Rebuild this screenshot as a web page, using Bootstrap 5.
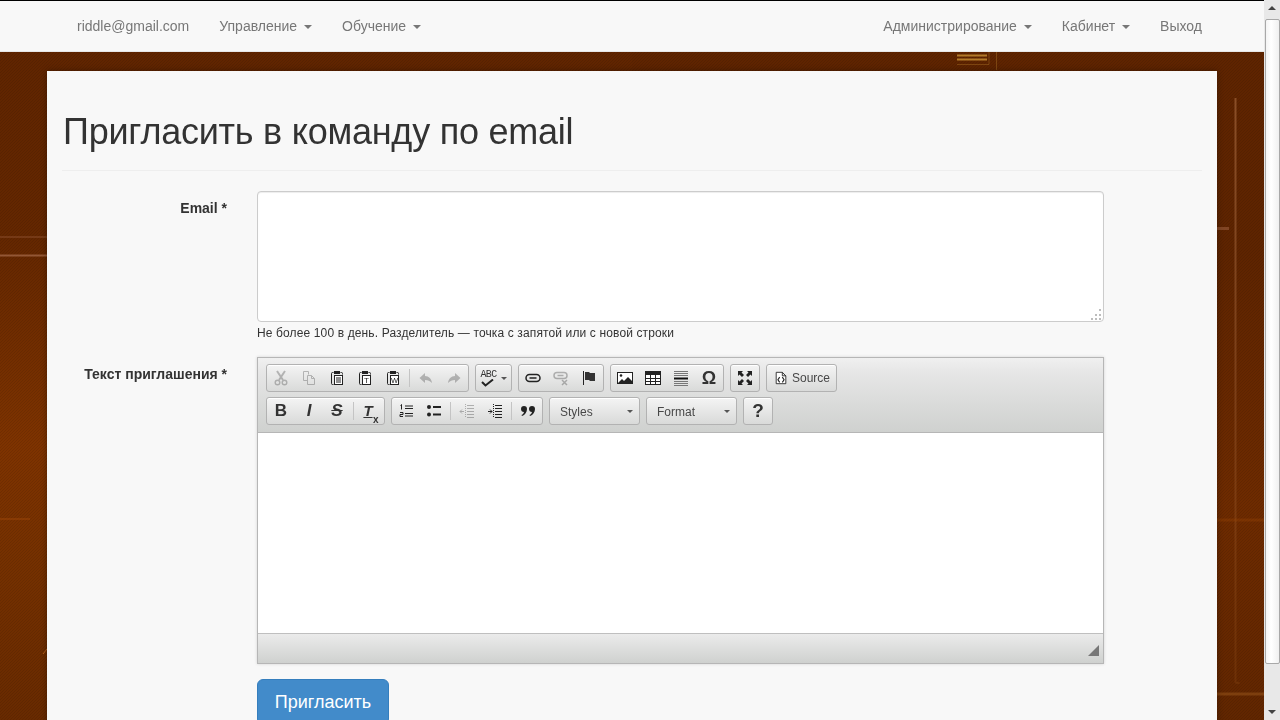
<!DOCTYPE html>
<html lang="ru">
<head>
    <meta charset="UTF-8">
    <meta name="viewport" content="width=device-width, initial-scale=1.0">
    <title>Пригласить в команду по email</title>
    <link href="https://cdn.jsdelivr.net/npm/bootstrap@5.3.0/dist/css/bootstrap.min.css" rel="stylesheet">
    <style>
        html, body { height: 100%; overflow: hidden; }
        body {
            font-family: "Liberation Sans", Arial, sans-serif;
            font-size: 14px;
            line-height: 20px;
            color: #333;
            background: #612500;
            padding-right: 16px;
        }
        /* background picture */
        .bg-art { position: fixed; top: 0; left: 0; width: 1264px; height: 720px; z-index: -1; }

        /* top menu */
        .top-bar {
            height: 52px;
            background: #f8f8f8;
            border-top: 1px solid #000;
            border-bottom: 1px solid #e7e7e7;
            padding: 0 47px 0 62px;
        }
        .top-bar .nav-link { color: #777; padding: 15px; line-height: 20px; }
        .top-bar .dropdown-toggle::after { margin-left: 7px; border-width: 4px 4px 0; vertical-align: 2px; }

        /* main panel */
        .main-panel {
            width: 1170px;
            margin: 19px 0 0 47px;
            padding: 0 15px;
            min-height: 660px;
            background: #f8f8f8;
            box-shadow: 0 0 6px rgba(0, 0, 0, .35);
        }
        .page-title {
            margin: 0 0 20px;
            padding: 41px 0 18px 1px;
            height: 100px;
            font-size: 36px;
            line-height: 39.6px;
            font-weight: 400;
            letter-spacing: -.24px;
            border-bottom: 1px solid #eee;
        }
        .form-line { --bs-gutter-x: 30px; }
        .form-line .col-9 { width: 877px; }
        .field-label { padding-top: 7px; text-align: right; font-weight: 700; }
        .mail-box {
            display: block;
            width: 100%;
            height: 131px;
            resize: none;
            border: 1px solid #ccc;
            border-radius: 4px;
            box-shadow: inset 0 1px 1px rgba(0, 0, 0, .075);
            background: #fff;
        }
        .grip { position: absolute; right: 2px; bottom: 2px; }
        .help-line { margin: 3px 0 15px; font-size: 12px; line-height: 17px; letter-spacing: .13px; }

        /* rich text editor */
        .editor { height: 307px; border: 1px solid #b6b6b6; box-shadow: 0 0 3px rgba(0, 0, 0, .15); }
        .editor-tools {
            height: 75px;
            padding: 6px 8px 0;
            background: linear-gradient(#f0f0f0, #e6e6e6 20%, #cfd1cf);
            border-bottom: 1px solid #b6b6b6;
        }
        .tool-row { height: 28px; margin-bottom: 5px; gap: 6px; }
        .tool-group {
            height: 28px;
            border: 1px solid #b2b2b2;
            border-radius: 3px;
            background: linear-gradient(#f4f4f4, #d9dad9);
            box-shadow: inset 0 1px 0 #fff;
        }
        .tool-btn {
            width: 28px;
            height: 26px;
            color: #333;
            font-size: 17px;
            line-height: 26px;
        }
        .tool-btn.off svg { opacity: .3; }
        .tool-btn svg { display: block; }
        .tool-sep { width: 5px; height: 26px; }
        .tool-sep::before { content: ""; display: block; width: 1px; height: 18px; margin: 4px 0 0 2px; background: #c4c4c4; }
        .wide-btn { width: 35px; }
        .spell-word { font-family: "Liberation Mono", monospace; font-size: 10px; line-height: 9px; letter-spacing: -.6px; }
        .drop-arrow { width: 0; height: 0; border: 3px solid transparent; border-top-color: #555; border-bottom: 0; }
        .source-btn { padding: 0 6px 0 7px; font-size: 12px; color: #484848; gap: 4px; }
        .combo {
            width: 91px;
            padding: 1px 6px 0 10px;
            font-size: 12px;
            color: #484848;
        }
        .glyph-b { font-weight: 700; }
        .glyph-i { font-weight: 700; font-style: italic; }
        .glyph-s { font-weight: 700; font-style: italic; text-decoration: line-through; }
        .glyph-big { font-weight: 700; font-size: 19px; color: #333; }
        .glyph-omega { font-weight: 700; font-size: 18px; }
        .glyph-clear { position: relative; font-style: italic; font-weight: 700; font-size: 15px; text-decoration: underline; padding-right: 4px; }
        .glyph-clear sub { font-size: 10px; font-style: normal; text-decoration: none; position: absolute; right: -2px; bottom: -1px; line-height: 10px; }
        .editor-body { height: 201px; background: #fff; border-bottom: 1px solid #bfbfbf; }
        .editor-foot {
            height: 29px;
            padding: 0 4px 7px 0;
            background: linear-gradient(#ebebeb, #cfd1cf);
        }

        .send-btn {
            margin-top: 15px;
            width: 132px;
            height: 46px;
            padding: 10px 16px;
            font-size: 18px;
            line-height: 24px;
            color: #fff;
            background: #428bca;
            border-color: #357ebd;
            border-radius: 6px;
        }

        /* browser scrollbar, sits over the page edge */
        .fake-scroll { position: fixed; top: 0; right: 0; width: 16px; height: 720px; background: #e8e8e8; }
        .scroll-thumb {
            height: 645px;
            margin: 19px 0 0 1px;
            width: 15px;
            background: linear-gradient(90deg, #f4f4f4, #fff 40%, #f0f0f0);
            border: 1px solid #a8a8a8;
            border-radius: 2px;
        }
        .scroll-up, .scroll-down { position: absolute; left: 4px; width: 0; height: 0; border: 4px solid transparent; }
        .scroll-up { top: 6px; border-bottom-color: #444; border-top: 0; }
        .scroll-down { bottom: 6px; border-top-color: #444; border-bottom: 0; }
    </style>
</head>
<body>
    <!-- фон страницы -->
    <svg class="bg-art" viewBox="0 0 1264 720" aria-hidden="true">
        <defs>
            <linearGradient id="leftGlow" x1="0" y1="0" x2="0" y2="1">
                <stop offset="0" stop-color="#5f2400"/>
                <stop offset=".33" stop-color="#642700"/>
                <stop offset=".62" stop-color="#7e3300"/>
                <stop offset=".8" stop-color="#743000"/>
                <stop offset="1" stop-color="#682a00"/>
            </linearGradient>
            <linearGradient id="rightGlow" x1="0" y1="0" x2="0" y2="1">
                <stop offset="0" stop-color="#5f2400"/>
                <stop offset=".35" stop-color="#5e2400"/>
                <stop offset=".7" stop-color="#6e2b00"/>
                <stop offset="1" stop-color="#612600"/>
            </linearGradient>
            <linearGradient id="fadeDown" x1="0" y1="0" x2="0" y2="1">
                <stop offset="0" stop-color="#a86a40" stop-opacity=".6"/>
                <stop offset=".5" stop-color="#a86a40" stop-opacity=".35"/>
                <stop offset="1" stop-color="#a05a20" stop-opacity=".2"/>
            </linearGradient>
            <pattern id="weave" width="3" height="3" patternUnits="userSpaceOnUse">
                <path d="M0 0h1v1H0zM2 1h1v1H2zM1 2h1v1H1z" fill="#000" fill-opacity=".09"/>
            </pattern>
        </defs>
        <rect x="0" y="0" width="632" height="720" fill="url(#leftGlow)"/>
        <rect x="632" y="0" width="632" height="720" fill="url(#rightGlow)"/>
        <rect x="0" y="0" width="1264" height="720" fill="url(#weave)"/>
        <path d="M0 255.500H47" stroke="#a86c4c" stroke-width="2" stroke-opacity=".7"/>
        <path d="M0 237H47" stroke="#8a4e2c" stroke-width="2" stroke-opacity=".5"/>
        <path d="M1217 228.500H1229" stroke="#8a4e2c" stroke-width="3" stroke-opacity=".8"/>
        <path d="M1217 694H1264" stroke="#8a4a14" stroke-width="3" stroke-opacity=".7"/>
        <path d="M1235.500 98V682q0 1 4 1" fill="none" stroke="url(#fadeDown)" stroke-width="2"/>
        <path d="M1249.500 98V640" fill="none" stroke="url(#fadeDown)" stroke-width="2"/>
        <path d="M43 654l4-5" stroke="#b4601c"/>
        <path d="M0 519H30" stroke="#a04a08" stroke-width="2" stroke-opacity=".45"/>
        <path d="M1217 520H1264" stroke="#a04a08" stroke-width="3" stroke-opacity=".3"/>
        <g stroke="#b27a2a" fill="none">
            <path d="M957 55.500H987M957 59.500H987" stroke-width="2"/>
            <path d="M957 64.500H989V52M996.500 52V70" stroke-opacity=".4"/>
        </g>
    </svg>

    <!-- иконки панели редактора -->
    <svg width="0" height="0" class="position-absolute" aria-hidden="true">
        <symbol id="i-cut" viewBox="0 0 16 16"><path d="M4 1l6 9M12 1L6 10" stroke="#333" stroke-width="2" fill="none"/><circle cx="4.500" cy="12.500" r="2.300" fill="none" stroke="#333" stroke-width="1.400"/><circle cx="11.500" cy="12.500" r="2.300" fill="none" stroke="#333" stroke-width="1.400"/></symbol>
        <symbol id="i-copy" viewBox="0 0 16 16"><path d="M2.500 1.500h5v3M2.500 1.500v9h4M6.500 5.500h4l3 3v6h-7zM10.500 5.500v3h3" fill="none" stroke="#333"/></symbol>
        <symbol id="i-clip" viewBox="0 0 16 16"><path d="M4.500 14.500h-1q-1 0-1-1v-10q0-1 1-1h1M11.500 2.500h1q1 0 1 1v1" fill="none" stroke="#222"/><rect x="5" y="1" width="6" height="3" fill="#222"/><rect x="5.500" y="5.500" width="8" height="9" fill="#fff" stroke="#222"/></symbol>
        <symbol id="i-undo" viewBox="0 0 16 16"><path d="M7 3L1.500 8 7 13V10c3 0 5 1 7 3-.5-4-3-7-7-7z" fill="#333"/></symbol>
        <symbol id="i-redo" viewBox="0 0 16 16"><path d="M9 3l5.500 5L9 13V10c-3 0-5 1-7 3 .5-4 3-7 7-7z" fill="#333"/></symbol>
        <symbol id="i-check" viewBox="0 0 16 8"><path d="M2 3l3.500 3.500L13 .5" fill="none" stroke="#222" stroke-width="2"/></symbol>
        <symbol id="i-link" viewBox="0 0 16 16"><rect x="1" y="4.500" width="14" height="7" rx="3.500" fill="none" stroke="#222" stroke-width="1.500"/><path d="M4.500 8h7" stroke="#222" stroke-width="1.500"/></symbol>
        <symbol id="i-unlink" viewBox="0 0 16 16"><rect x="1" y="2.500" width="13" height="6" rx="3" fill="none" stroke="#222" stroke-width="1.500"/><path d="M4.500 5.500h6" stroke="#222" stroke-width="1.500"/><path d="M9 10l5 5M14 10l-5 5" stroke="#222" stroke-width="1.500"/></symbol>
        <symbol id="i-flag" viewBox="0 0 16 16"><path d="M2.500 1v14" stroke="#222"/><path d="M4 2h4l1 1h5v8H9L8 10H4z" fill="#333"/></symbol>
        <symbol id="i-image" viewBox="0 0 16 16"><rect x=".5" y="2.500" width="15" height="11" fill="#fff" stroke="#222"/><circle cx="4" cy="5.500" r="1.300" fill="#222"/><path d="M1 13l4-4 2 2 4-4 4 4v2z" fill="#222"/></symbol>
        <symbol id="i-table" viewBox="0 0 16 16"><rect x=".5" y="1.500" width="15" height="13" fill="#fff" stroke="#222"/><path d="M1 2h14v3H1z" fill="#222"/><path d="M5.500 5v9M10.500 5v9M1 8.500h14M1 11.500h14" stroke="#222"/></symbol>
        <symbol id="i-rule" viewBox="0 0 16 16"><path d="M1 1.500h14M1 3.500h14M1 5.500h14M1 11.500h14M1 13.500h14M1 15.500h14" stroke="#777"/><path d="M1 8.500h14" stroke="#111" stroke-width="2"/></symbol>
        <symbol id="i-max" viewBox="0 0 16 16"><path d="M1 1h5L4.500 2.500 7 5 5 7 2.500 4.500 1 6zM15 1v5l-1.500-1.500L11 7 9 5l2.500-2.500L10 1zM1 15v-5l1.500 1.500L5 9l2 2-2.500 2.500L6 15zM15 15h-5l1.500-1.500L9 11l2-2 2.500 2.500L15 10z" fill="#222"/></symbol>
        <symbol id="i-source" viewBox="0 0 16 16"><path d="M2.500 1.500h7l4 4v9h-11zM9.500 1.500v4h4" fill="#fff" stroke="#222"/><path d="M6.500 7L4.500 10l2 3M9.500 7l2 3-2 3" fill="none" stroke="#222" stroke-width="1.300"/></symbol>
        <symbol id="i-numbered" viewBox="0 0 16 16"><path d="M7 3h8M7 5.500h8M7 10.500h8M7 13h8" stroke="#222" stroke-width="1.200"/><path d="M3.500 1.500v5M2.500 2.500l1-1M2 9.500h3v2H2v2h3" fill="none" stroke="#222"/></symbol>
        <symbol id="i-bulleted" viewBox="0 0 16 16"><circle cx="3" cy="4" r="2" fill="#222"/><circle cx="3" cy="11.500" r="2" fill="#222"/><path d="M7 3h8v2H7zM7 10.500h8v2H7z" fill="#222"/></symbol>
        <symbol id="i-outdent" viewBox="0 0 16 16"><path d="M8 2.500h7M8 5.500h7M8 8.500h7M8 11.500h7M8 14.500h7" stroke="#222"/><path d="M6.500 1v14" stroke="#222" stroke-dasharray="1 1"/><path d="M5 8.500H1M3 6.500l-2 2 2 2" fill="none" stroke="#222"/></symbol>
        <symbol id="i-indent" viewBox="0 0 16 16"><path d="M8 2.500h7M8 5.500h7M8 8.500h7M8 11.500h7M8 14.500h7" stroke="#222"/><path d="M6.500 1v14" stroke="#222" stroke-dasharray="1 1"/><path d="M1 8.500h4M3 6.500l2 2-2 2" fill="none" stroke="#222"/></symbol>
        <symbol id="i-quote" viewBox="0 0 16 16"><path d="M1 6a3 3 0 1 1 6 0c0 3-2 6-5 7l-.5-1c1.500-.8 2.300-2 2.500-3.100A3 3 0 0 1 1 6zM9 6a3 3 0 1 1 6 0c0 3-2 6-5 7l-.5-1c1.500-.8 2.300-2 2.500-3.100A3 3 0 0 1 9 6z" fill="#222"/></symbol>
    </svg>

    <nav class="top-bar d-flex justify-content-between">
        <ul class="nav">
            <li class="nav-item"><a class="nav-link" href="#">riddle@gmail.com</a></li>
            <li class="nav-item"><a class="nav-link dropdown-toggle" href="#">Управление</a></li>
            <li class="nav-item"><a class="nav-link dropdown-toggle" href="#">Обучение</a></li>
        </ul>
        <ul class="nav">
            <li class="nav-item"><a class="nav-link dropdown-toggle" href="#">Администрирование</a></li>
            <li class="nav-item"><a class="nav-link dropdown-toggle" href="#">Кабинет</a></li>
            <li class="nav-item"><a class="nav-link" href="#">Выход</a></li>
        </ul>
    </nav>

    <div class="main-panel">
        <h1 class="page-title">Пригласить в команду по email</h1>

        <form>
            <div class="row form-line">
                <label class="col-2 field-label">Email *</label>
                <div class="col-9">
                    <div class="position-relative">
                        <textarea class="mail-box"></textarea>
                        <svg class="grip" width="11" height="11" viewBox="0 0 11 11" aria-hidden="true">
                            <path d="M8 0h2v2H8zM4 5h2v2H4zM8 5h2v2H8zM0 9h2v2H0zM4 9h2v2H4zM8 9h2v2H8z" fill="#bdbdbd"/>
                        </svg>
                    </div>
                    <div class="help-line">Не более 100 в день. Разделитель — точка с запятой или с новой строки</div>
                </div>
            </div>

            <div class="row form-line">
                <label class="col-2 field-label">Текст приглашения *</label>
                <div class="col-9">
                    <div class="editor">
                        <div class="editor-tools">
                            <div class="tool-row d-flex">
                                <div class="tool-group d-flex">
                                    <span class="tool-btn off d-flex align-items-center justify-content-center"><svg width="16" height="16"><use href="#i-cut"/></svg></span>
                                    <span class="tool-btn off d-flex align-items-center justify-content-center"><svg width="16" height="16"><use href="#i-copy"/></svg></span>
                                    <span class="tool-btn d-flex align-items-center justify-content-center"><svg width="16" height="16" viewBox="0 0 16 16"><use href="#i-clip"/><path d="M7 8h5M7 10h5M7 12h5" stroke="#222"/></svg></span>
                                    <span class="tool-btn d-flex align-items-center justify-content-center"><svg width="16" height="16" viewBox="0 0 16 16"><use href="#i-clip"/><text x="9.500" y="13" text-anchor="middle" font-size="8" font-family="Liberation Sans" fill="#222">T</text></svg></span>
                                    <span class="tool-btn d-flex align-items-center justify-content-center"><svg width="16" height="16" viewBox="0 0 16 16"><use href="#i-clip"/><text x="9.500" y="13" text-anchor="middle" font-size="7.500" font-family="Liberation Sans" fill="#222">W</text></svg></span>
                                    <span class="tool-sep"></span>
                                    <span class="tool-btn off d-flex align-items-center justify-content-center"><svg width="16" height="16"><use href="#i-undo"/></svg></span>
                                    <span class="tool-btn off d-flex align-items-center justify-content-center"><svg width="16" height="16"><use href="#i-redo"/></svg></span>
                                </div>
                                <div class="tool-group d-flex">
                                    <span class="tool-btn wide-btn d-flex align-items-center justify-content-center gap-1">
                                        <span class="d-flex flex-column align-items-center">
                                            <span class="spell-word">ABC</span>
                                            <svg width="16" height="8"><use href="#i-check"/></svg>
                                        </span>
                                        <span class="drop-arrow"></span>
                                    </span>
                                </div>
                                <div class="tool-group d-flex">
                                    <span class="tool-btn d-flex align-items-center justify-content-center"><svg width="16" height="16"><use href="#i-link"/></svg></span>
                                    <span class="tool-btn off d-flex align-items-center justify-content-center"><svg width="16" height="16"><use href="#i-unlink"/></svg></span>
                                    <span class="tool-btn d-flex align-items-center justify-content-center"><svg width="16" height="16"><use href="#i-flag"/></svg></span>
                                </div>
                                <div class="tool-group d-flex">
                                    <span class="tool-btn d-flex align-items-center justify-content-center"><svg width="16" height="16"><use href="#i-image"/></svg></span>
                                    <span class="tool-btn d-flex align-items-center justify-content-center"><svg width="16" height="16"><use href="#i-table"/></svg></span>
                                    <span class="tool-btn d-flex align-items-center justify-content-center"><svg width="16" height="16"><use href="#i-rule"/></svg></span>
                                    <span class="tool-btn glyph-omega d-flex align-items-center justify-content-center">Ω</span>
                                </div>
                                <div class="tool-group d-flex">
                                    <span class="tool-btn d-flex align-items-center justify-content-center"><svg width="16" height="16"><use href="#i-max"/></svg></span>
                                </div>
                                <div class="tool-group d-flex">
                                    <span class="source-btn d-flex align-items-center"><svg width="14" height="16"><use href="#i-source"/></svg>Source</span>
                                </div>
                            </div>
                            <div class="tool-row d-flex">
                                <div class="tool-group d-flex">
                                    <span class="tool-btn glyph-b d-flex align-items-center justify-content-center">B</span>
                                    <span class="tool-btn glyph-i d-flex align-items-center justify-content-center">I</span>
                                    <span class="tool-btn glyph-s d-flex align-items-center justify-content-center">S</span>
                                    <span class="tool-sep"></span>
                                    <span class="tool-btn d-flex align-items-center justify-content-center"><span class="glyph-clear">T<sub>x</sub></span></span>
                                </div>
                                <div class="tool-group d-flex">
                                    <span class="tool-btn d-flex align-items-center justify-content-center"><svg width="16" height="16"><use href="#i-numbered"/></svg></span>
                                    <span class="tool-btn d-flex align-items-center justify-content-center"><svg width="16" height="16"><use href="#i-bulleted"/></svg></span>
                                    <span class="tool-sep"></span>
                                    <span class="tool-btn off d-flex align-items-center justify-content-center"><svg width="16" height="16"><use href="#i-outdent"/></svg></span>
                                    <span class="tool-btn d-flex align-items-center justify-content-center"><svg width="16" height="16"><use href="#i-indent"/></svg></span>
                                    <span class="tool-sep"></span>
                                    <span class="tool-btn d-flex align-items-center justify-content-center"><svg width="16" height="16"><use href="#i-quote"/></svg></span>
                                </div>
                                <div class="tool-group combo d-flex align-items-center justify-content-between">Styles<span class="drop-arrow"></span></div>
                                <div class="tool-group combo d-flex align-items-center justify-content-between">Format<span class="drop-arrow"></span></div>
                                <div class="tool-group d-flex">
                                    <span class="tool-btn glyph-big d-flex align-items-center justify-content-center">?</span>
                                </div>
                            </div>
                        </div>
                        <div class="editor-body"></div>
                        <div class="editor-foot d-flex justify-content-end align-items-end">
                            <svg width="11" height="11" viewBox="0 0 11 11" aria-hidden="true"><path d="M11 0v11H0z" fill="#777"/></svg>
                        </div>
                    </div>
                    <button type="button" class="btn send-btn">Пригласить</button>
                </div>
            </div>
        </form>
    </div>

    <div class="fake-scroll">
        <div class="scroll-up"></div>
        <div class="scroll-thumb"></div>
        <div class="scroll-down"></div>
    </div>

    <script src="https://cdn.jsdelivr.net/npm/bootstrap@5.3.0/dist/js/bootstrap.bundle.min.js"></script>
</body>
</html>
